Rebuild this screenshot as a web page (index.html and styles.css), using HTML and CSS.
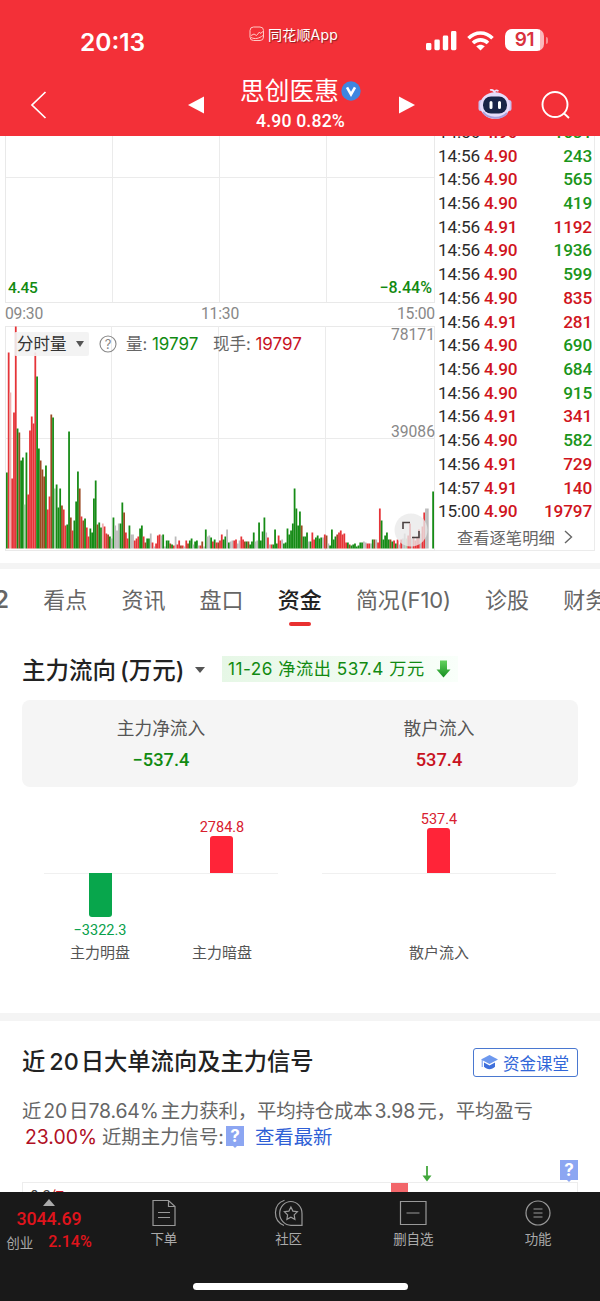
FILE: index.html
```html
<!DOCTYPE html>
<html lang="zh-CN">
<head>
<meta charset="utf-8">
<title>思创医惠</title>
<link rel="stylesheet" href="styles.css">
</head>
<body>
<header class="header">
  <div class="status">
    <div class="clock">20:13</div>
    <div class="app-mark">
      <svg width="16" height="16" viewBox="0 0 16 16" fill="none" stroke="#ffc9c4" stroke-width="1"><rect x="1" y="1" width="13.5" height="13.5" rx="3.5"/><path d="M2 9.5l3-1.5 2.5 1.5 3-3.5 1 1.5 2.500-2M2 11.500c4 2 8 1 12-2"/></svg>
      <span>同花顺App</span>
    </div>
    <div class="signals">
      <svg width="31" height="20" viewBox="0 0 31 20" fill="#fff"><rect x="0" y="12" width="5.400" height="7.200" rx="1.400"/><rect x="8.400" y="8.500" width="5.400" height="10.700" rx="1.400"/><rect x="16.800" y="4.500" width="5.400" height="14.700" rx="1.400"/><rect x="25" y="0" width="5.400" height="19.200" rx="1.400"/></svg>
      <svg width="27" height="20" viewBox="0 0 27 20" fill="none" stroke="#fff" stroke-width="3.600"><path d="M1.500 7.300C8.500 .2 18.500 .2 25.500 7.300"/><path d="M6 12c4.300-4.200 10.700-4.200 15 0"/><path d="M13.500 19.500L9.200 15.300c2.500-2.200 6.100-2.200 8.600 0z" fill="#fff" stroke="none"/></svg>
      <div class="battery"><span>91</span></div>
    </div>
  </div>
  <div class="nav">
    <svg class="back" width="18" height="30" viewBox="0 0 18 30" fill="none" stroke="#fff" stroke-width="1.700"><path d="M15.500 2L2 15l13.500 13"/></svg>
    <svg class="prev" width="17" height="18" viewBox="0 0 17 18" fill="#fff"><path d="M0 9L16 .5v17z"/></svg>
    <div class="stock">
      <div class="stock-name">思创医惠<svg width="20" height="20" viewBox="0 0 20 20"><circle cx="10" cy="10" r="9.700" fill="#3f86e0"/><path d="M6 6.300l4 7 4-7" fill="none" stroke="#fff" stroke-width="2.600"/></svg></div>
      <div class="stock-price">4.90 0.82%</div>
    </div>
    <svg class="next" width="17" height="18" viewBox="0 0 17 18" fill="#fff"><path d="M16 9L0 .5v17z"/></svg>
    <svg class="robot" width="34" height="32" viewBox="0 0 34 32"><path d="M17 5c-1-3-3-3.500-5-3M16.500 5c0-3 2-3 4-2" fill="none" stroke="#eee5ff" stroke-width="1.800"/><rect x=".5" y="12" width="5" height="11" rx="2.500" fill="#c9c0ef"/><rect x="28.500" y="12" width="5" height="11" rx="2.500" fill="#c9c0ef"/><ellipse cx="17" cy="17.500" rx="15" ry="13.300" fill="#e6ddfb"/><path d="M5 24c5 7 18 8 24 1" fill="none" stroke="#a9a0de" stroke-width="2"/><rect x="5" y="8.500" width="24" height="17" rx="8" fill="#1a2548"/><path d="M13 14.500v5M21.500 14.500v5" stroke="#fff" stroke-width="3" stroke-linecap="round"/></svg>
    <svg class="search" width="30" height="30" viewBox="0 0 30 30" fill="none" stroke="#fff" stroke-width="1.900"><circle cx="14" cy="14.500" r="12.500"/><path d="M22.800 23.300l5.200 4.700"/></svg>
  </div>
</header>

<section class="quote">
  <div class="minute">
    <div class="price-pane"><span class="low first">4.45</span><span class="low">−8.44%</span></div>
    <div class="times"><span>09:30</span><span>11:30</span><span>15:00</span></div>
    <div class="volume-pane">
      <svg id="volume" class="volume-bars" width="430" height="224" viewBox="5 326 430 224"></svg>
      <div class="scale"><span>78171</span><span>39086</span></div>
      <div class="volume-head">
        <div class="picker">分时量<i class="caret"></i></div>
        <svg width="18" height="18" viewBox="0 0 18 18"><circle cx="9" cy="9" r="8" fill="none" stroke="#888" stroke-width="1.100"/><text x="9" y="13.500" class="ask">?</text></svg>
        <span class="vol">量: <b class="g">19797</b></span>
        <span class="hand">现手: <b class="r">19797</b></span>
      </div>
      <svg class="expand" width="34" height="34" viewBox="0 0 34 34"><circle cx="17" cy="17" r="16.500" fill="#e9e9e9" fill-opacity=".78"/><path d="M9 16V9.500h7M25 18v6.500h-7" fill="none" stroke="#494040" stroke-width="1.600"/></svg>
    </div>
  </div>
  <div class="ticks">
    <div id="ticks" class="tick-list"></div>
    <div class="more">查看逐笔明细<svg width="9" height="14" viewBox="0 0 9 14" fill="none" stroke="#666" stroke-width="1.400"><path d="M1 1l6.500 6L1 13"/></svg></div>
  </div>
</section>

<nav class="tabs">
  <span class="tab-cut">2</span><span>看点</span><span>资讯</span><span>盘口</span><span class="active">资金</span><span class="f10">简况(F10)</span><span>诊股</span><span>财务</span>
</nav>

<section class="flow">
  <div class="flow-head">
    <h2>主力流向<em>(万元)</em></h2><i class="caret"></i>
    <div class="tag">11-26 净流出 537.4 万元
      <svg width="15" height="18" viewBox="0 0 15 18"><defs><linearGradient id="down" x2="0" y2="1"><stop stop-color="#65d35f"/><stop offset="1" stop-color="#158e20"/></linearGradient></defs><path d="M4 .5h7v9h3.500L7.500 17.500.5 9.500H4z" fill="url(#down)"/></svg>
    </div>
  </div>
  <div class="card">
    <div><span>主力净流入</span><b class="g">−537.4</b></div>
    <div><span>散户流入</span><b class="r">537.4</b></div>
  </div>
  <div class="bars">
    <div class="group pair">
      <div class="col"><div class="up"></div><div class="down"><i></i><b>−3322.3</b></div><span>主力明盘</span></div>
      <div class="col"><div class="up"><b>2784.8</b><i class="h37"></i></div><div class="down"></div><span>主力暗盘</span></div>
    </div>
    <div class="group">
      <div class="col"><div class="up"><b>537.4</b><i class="h45"></i></div><div class="down"></div><span>散户流入</span></div>
    </div>
  </div>
</section>

<section class="signal">
  <div class="signal-head">
    <h2>近<em>20</em>日大单流向及主力信号</h2>
    <div class="course"><svg width="17" height="15" viewBox="0 0 17 15"><path d="M8.500 0L17 4.500 8.500 9 0 4.500z" fill="#6d98ee"/><path d="M3 7.500l5.500 3 5.500-3v4.300c-3 3.200-8 3.200-11 0z" fill="#3f70dc"/><path d="M1.200 5v7" stroke="#6d98ee"/></svg>资金课堂</div>
  </div>
  <p class="line1">近<i>20</i>日<i class="pct">78.64%</i>主力获利，平均持仓成本<i>3.98</i>元，平均盈亏</p>
  <p class="line2"><i class="gain">23.00%</i><span>近期主力信号:</span><svg width="20" height="22" viewBox="0 0 20 22"><path d="M1 0h18v20h-7l-2 2-2-2H1z" fill="#8ca6f2"/><text x="10" y="16" class="mark">?</text></svg><a>查看最新</a></p>
  <div class="markers">
    <svg class="arrow" width="10" height="16" viewBox="0 0 10 16"><path d="M5 0v13" stroke="#43a83c" stroke-width="1.800"/><path d="M.5 9.500h9L5 15.500z" fill="#43a83c"/></svg>
    <svg width="20" height="22" viewBox="0 0 20 22"><path d="M1 0h18v20h-7l-2 2-2-2H1z" fill="#8ca6f2"/><text x="10" y="16" class="mark">?</text></svg>
  </div>
  <div class="signal-chart"><span>0.3<em>亿</em></span><i></i></div>
</section>

<footer class="bottom">
  <div class="index">
    <i class="tri"></i>
    <b>3044.69</b>
    <div><span>创业</span><b>2.14%</b></div>
  </div>
  <div class="item"><svg width="28" height="28" viewBox="0 0 28 28"><path d="M3 1.500h15.500l6.500 6V26.500H3zM18.500 1.500v6H25M8 13.500h12M8 18.500h12"/></svg>下单</div>
  <div class="item social"><svg width="30" height="28" viewBox="0 0 30 28"><path d="M10.500 1.200C-1.500 5 -1.500 22 10 26.500M27.500 26.300H17c-6 0-11.300-5-11.300-11.800S11 2.500 16.800 2.500 28 7.500 28 14.500v11.800z"/><path d="M16.900 8l2 4.100 4.500.6-3.200 3.200.7 4.500-4-2.100-4 2.100.7-4.500-3.200-3.200 4.500-.6z"/></svg>社区</div>
  <div class="item"><svg width="28" height="28" viewBox="0 0 28 28"><path d="M1.500 2.500h25.500v23H1.500zM7.500 14h13"/></svg>删自选</div>
  <div class="item"><svg width="28" height="28" viewBox="0 0 28 28"><circle cx="14" cy="14" r="12"/><path d="M9.500 10h9M9.500 14h9M9.500 18h9"/></svg>功能</div>
  <i class="home"></i>
</footer>
<script src="chart.js"></script>
</body>
</html>
```
FILE: styles.css
```css
* { box-sizing: border-box; margin: 0; }
body { width: 600px; height: 1301px; overflow: hidden; background: #fff; color: #222; display: flex; flex-direction: column; font-family: Inter, "Noto Sans CJK SC", sans-serif; }
i, em { font-style: normal; }
svg { display: block; flex: none; }
.g { color: #118a11; }
.r { color: #c8131f; }

.header { height: 136px; flex: none; background: #f33038; color: #fff; position: relative; z-index: 2; }
.status { height: 72px; display: grid; grid-template-columns: 226px 1fr 188px; }
.clock { padding: 27px 0 0 80px; font-size: 24.500px; line-height: 30px; font-weight: 600; letter-spacing: 0; }
.app-mark { display: flex; gap: 3px; padding: 26px 0 0 23px; font: 14px/18px Inter, "Noto Sans CJK SC", sans-serif; white-space: nowrap; text-shadow: 1px 1px 1px #8a2024; letter-spacing: .2px; }
.signals { display: flex; padding-top: 31px; padding-left: 14px; gap: 10px; }
.battery { margin: -2px 0 0 1px; width: 39px; height: 22px; border-radius: 7px; background: linear-gradient(90deg, #fff 91%, #fab8bb 91%); color: #d9323d; font-size: 19px; line-height: 22px; font-weight: 600; text-align: center; position: relative; letter-spacing: -.3px; }
.battery::after { content: ""; position: absolute; right: -4px; top: 8px; width: 2px; height: 7px; border-radius: 0 2px 2px 0; background: #f98d91; }
.nav { height: 64px; display: flex; align-items: flex-start; }
.back { margin: 18px 0 0 30px; }
.prev { margin: 24px 0 0 140px; }
.stock { width: 195px; margin-top: 2px; padding-left: 0; display: flex; flex-direction: column; align-items: center; }
.stock-name { display: flex; align-items: center; gap: 2px; font-size: 24.700px; line-height: 34px; font-weight: 400; margin-left: -4px; white-space: nowrap; }
.stock-price { font: 500 17.700px/24px Roboto, sans-serif; letter-spacing: .15px; margin: 1px 0 0 -4px; }
.next { margin: 24px 0 0 -1px; }
.robot { margin: 16px 0 0 62px; }
.search { margin: 18px 0 0 29px; }

.quote { height: 433px; flex: none; display: flex; padding-left: 5px; border-bottom: 6px solid #f4f4f4; }
.minute { width: 430px; flex: none; }
.price-pane { height: 167px; border: 1px solid #e9e9e9; border-top: 0; background: linear-gradient(#ebebeb, #ebebeb) 106px 0 / 1px 100% no-repeat, linear-gradient(#ebebeb, #ebebeb) 213px 0 / 1px 100% no-repeat, linear-gradient(#ebebeb, #ebebeb) 320px 0 / 1px 100% no-repeat, linear-gradient(#ebebeb, #ebebeb) 0 41px / 100% 1px no-repeat; display: flex; justify-content: space-between; align-items: flex-end; padding: 0 2px 4px; }
.low { font: 500 16px/20px Roboto, sans-serif; color: #118a11; }
.first { font-size: 15.500px; letter-spacing: -.3px; }
.times { height: 23px; display: flex; justify-content: space-between; font: 15.700px/22px Roboto, sans-serif; letter-spacing: -.2px; color: #888; }
.volume-pane { position: relative; height: 225px; border: 1px solid #e9e9e9; }
.volume-bars { position: absolute; left: -1px; top: -1px; }
.scale { position: absolute; right: -1px; top: -2px; display: flex; flex-direction: column; gap: 77px; text-align: right; font: 15.700px/20px Roboto, sans-serif; color: #888; }
.volume-head { position: absolute; left: 8px; top: 5px; height: 24px; display: flex; align-items: center; font: 16.500px/24px Inter, "Noto Sans CJK SC", sans-serif; color: #666; white-space: nowrap; }
.volume-head b { font-weight: 400; font-size: 17px; }
.picker { width: 75px; height: 24px; padding-left: 3px; background: rgba(242, 242, 242, .9); color: #333; display: flex; align-items: center; gap: 9px; border-radius: 2px; margin-right: 10px; }
.caret { width: 0; height: 0; border: 4.500px solid transparent; border-top: 6px solid #555; border-bottom: 0; }
.ask { font: 13px Inter, sans-serif; fill: #888; text-anchor: middle; }
.vol { margin-left: 9px; width: 87px; }
.expand { position: absolute; left: 388px; top: 186px; }
.ticks { width: 160px; height: 415px; flex: none; border-right: 1px solid #ebebeb; border-bottom: 1px solid #ebebeb; }
.tick-list { height: 387px; overflow: hidden; display: flex; flex-direction: column; justify-content: flex-end; padding: 0 2px 0 3px; }
.tick { height: 23.730px; flex: none; display: grid; grid-template-columns: 46px 50px 1fr; font: 500 17.200px/24px Roboto, sans-serif; letter-spacing: -.15px; color: #2b2b2b; }
.tick span:last-child { text-align: right; }
.tick .g { color: #1a951a; }
.tick .r { color: #d01420; }
.tick span:first-child { font-weight: 400; }
.more { display: flex; align-items: center; gap: 9px; padding-left: 22px; height: 27px; font: 16.300px/24px "Noto Sans CJK SC", sans-serif; color: #666; }

.tabs { height: 76px; flex: none; display: flex; gap: 34.200px; padding-top: 14px; font: 22px/34px Inter, "Noto Sans CJK SC", sans-serif; color: #666; font-weight: 400; white-space: nowrap; overflow: hidden; }
.tab-cut { width: 9px; display: flex; justify-content: flex-end; font-weight: 600; font-size: 24px; font-family: Inter, sans-serif; }
.active { color: #222; font-weight: 500; display: flex; flex-direction: column; align-items: center; }
.active::after { content: ""; width: 22px; height: 4px; margin-top: 5px; border-radius: 2px; background: #e93030; }
.f10 { letter-spacing: -.15px; }

.flow { height: 376px; flex: none; padding: 10px 22px 0; border-bottom: 8px solid #f4f4f4; }
.flow-head { height: 45px; display: flex; align-items: flex-start; }
.flow h2 { font: 500 23.500px/32px Inter, "Noto Sans CJK SC", sans-serif; white-space: nowrap; width: 162px; }
.flow h2 em { margin-left: 4px; }
.flow-head > .caret { margin: 12px 17px 0 11px; border-width: 6px 5.500px 0; }
.tag { margin-top: 1px; height: 26px; display: flex; align-items: center; gap: 11px; padding: 0 7px 0 6px; font-size: 17.200px; letter-spacing: .5px; line-height: 26px; color: #118a11; white-space: nowrap; background: linear-gradient(90deg, #e6f7e6, #f9fffa); }
.card { height: 87px; border-radius: 8px; background: #f5f5f5; display: grid; grid-template-columns: 1fr 1fr; text-align: center; line-height: 30px; padding-top: 14px; }
.card div { display: flex; flex-direction: column; }
.card span { font-size: 17.700px; font-weight: 400; color: #555; }
.card b { font: 500 18.300px/32px Roboto, sans-serif; }
.bars { display: grid; grid-template-columns: 1fr 1fr; padding-top: 20px; }
.group { display: grid; grid-template-columns: 1fr; padding: 0 22px; background: linear-gradient(#f0f0f0, #f0f0f0) center 66px / 234px 1px no-repeat; }
.pair { grid-template-columns: 1fr 1fr; padding: 0 17px; }
.col { display: flex; flex-direction: column; align-items: center; }
.up { height: 66px; display: flex; flex-direction: column; justify-content: flex-end; align-items: center; }
.down { height: 67px; display: flex; flex-direction: column; align-items: center; }
.col b { font: 400 14.500px/18px Roboto, sans-serif; }
.up b { color: #d8202f; margin-bottom: -2px; }
.down b { color: #08a04a; margin-top: 5px; }
.up i { width: 23px; background: #ff2438; border-radius: 3px 3px 0 0; margin-top: 1px; }
.h37 { height: 37px; }
.h45 { height: 45px; }
.down i { width: 23px; height: 45px; border-radius: 0 0 3px 3px; background: #08a64c; }
.col span { font-size: 15px; line-height: 26px; color: #555; font-weight: 400; }

.signal { flex: 1; padding: 27px 22px 0; overflow: hidden; }
.signal-head { display: flex; justify-content: space-between; height: 50px; }
.signal h2 { font: 500 23.300px/28px Inter, "Noto Sans CJK SC", sans-serif; white-space: nowrap; }
.signal h2 em { margin: 0 2px 0 4px; }
.course { width: 105px; height: 29px; border: 1px solid #4a78d0; border-radius: 3px; display: flex; align-items: center; gap: 5px; padding-left: 7px; font-size: 16.500px; color: #3166d8; white-space: nowrap; }
.signal p { height: 26px; line-height: 26px; font-size: 19.400px; color: #666; font-weight: 400; white-space: nowrap; }
.signal .line1 { letter-spacing: -.12px; }
.line1 i { margin: 0 2px; }
.line1 .pct { margin-left: 0; }
.signal .line2 { display: flex; align-items: center; padding-left: 3px; }
.gain { color: #b00f24; margin-right: 5px; }
.line2 a { color: #2f5fd6; margin-left: 10px; font-weight: 400; }
.line2 svg { margin-left: 1px; }
.mark { font: 700 17px Inter, sans-serif; fill: #fff; text-anchor: middle; }
.markers { height: 32px; display: flex; justify-content: flex-end; align-items: flex-end; margin-right: -1px; gap: 127px; }
.markers svg { margin-bottom: 0; }
.signal-chart { height: 40px; border: 1px solid #ededed; display: flex; align-items: flex-start; font-size: 14px; color: #444; }
.signal-chart span { padding: 4px 0 0 7px; line-height: 18px; width: 368px; }
.signal-chart em { color: #c8131f; }
.signal-chart i { width: 17px; height: 20px; background: #f2666a; }

.bottom { height: 109px; flex: none; background: #191919; display: grid; grid-template-columns: 101px repeat(4, 1fr); position: relative; z-index: 2; }
.index { display: flex; flex-direction: column; align-items: center; color: #e0141c; padding: 7px 3px 0 0; }
.index b { font: 500 17.700px/27px Roboto, sans-serif; }
.tri { border: 6px solid transparent; border-top: 0; border-bottom: 7px solid #aaa; }
.index div { display: flex; align-items: center; gap: 15px; height: 18px; }
.index span { color: #aaa; font-size: 13.500px; }
.index div b { font-size: 16px; line-height: 20px; }
.item { display: flex; flex-direction: column; align-items: center; padding: 7px 0 0 1px; color: #aaa; font-size: 13.500px; line-height: 25px; }
.item svg { fill: none; stroke: #999; stroke-width: 1.200; }
.home { position: absolute; left: 193px; top: 91px; width: 215px; height: 7px; border-radius: 4px; background: #fff; }
```
FILE: chart.js
```js
// One entry per trading minute: colour key, then bar height.
const minutes = `g76 r196 p156 r70 r136 r222 g120 m116 g88 g91 l44 g96 r54 r118 r132 r125 r196 g172 g100 m88
m79 m72 g83 r39 r52 m134 g131 l60 g64 g41 g60 m43 r39 r23 g24 g117 m31 r18 g28 g47
g77 m60 r32 m28 g30 r21 r12 g20 g16 g50 g68 m24 g26 g21 p25 r22 r15 m14 g12 n10
g31 n23 n18 n25 g25 g46 m36 r16 r10 g23 n14 n14 r8 r10 r12 g20 g23 r12 m6 g10
g10 n15 r6 n2 r5 r13 r14 n13 g14 n2 g8 g8 m5 g4 r3 n12 r4 r8 m3 r3
n2 r8 m5 g8 g10 n4 g7 g8 n3 r3 m7 n2 g19 n12 n13 g11 r7 g9 r6 m6
r8 r14 g9 g12 n19 g6 n7 n8 r8 r9 n5 n8 r12 r9 m7 g7 m7 g4 g7 g16
n7 n8 g26 g8 g17 g31 n16 r11 n4 r4 g4 g19 g5 r13 r8 n9 g5 g6 g20 g14
g18 g25 g60 g40 g23 g37 m23 g12 g12 g16 n7 g7 r16 r9 g11 g13 g10 g11 n11 r14
m13 n5 g3 g19 g9 g12 m14 r16 r18 r14 r15 r6 g6 m4 g3 g4 g5 g2 g3 g6
g6 n7 n6 r5 r5 n5 g9 m9 n9 r6 r40 g28 g9 g13 g16 g9 m9 g7 r8 g5
r9 n4 r9 n10 n15 l10 r13 r25 n10 r12 r8 r12 r19 n15 r22 r36 n40 n40 n0 n0 g57`.split(/\s+/);
const colours = { g: '#168b16', r: '#e53438', m: '#9a4a22', p: '#efb0b0', l: '#a9d0a9', n: '#bbb' };
const step = 428 / 241;
const grid = '<path d="M111.5 326v224M218.500 326v224M325.500 326v224M5 438.500h430" stroke="#ebebeb"/>';
document.getElementById('volume').innerHTML = grid + minutes.map((m, i) =>
  `<rect x="${(6 + i * step).toFixed(2)}" y="${548.5 - m.slice(1)}" width="1.78" height="${m.slice(1)}" fill="${colours[m[0]]}"/>`).join('');

const trades = [
  ['14:56', '4.90', '1631', 'g'], ['14:56', '4.90', '243', 'g'], ['14:56', '4.90', '565', 'g'],
  ['14:56', '4.90', '419', 'g'], ['14:56', '4.91', '1192', 'r'], ['14:56', '4.90', '1936', 'g'],
  ['14:56', '4.90', '599', 'g'], ['14:56', '4.90', '835', 'r'], ['14:56', '4.91', '281', 'r'],
  ['14:56', '4.90', '690', 'g'], ['14:56', '4.90', '684', 'g'], ['14:56', '4.90', '915', 'g'],
  ['14:56', '4.91', '341', 'r'], ['14:56', '4.90', '582', 'g'], ['14:56', '4.91', '729', 'r'],
  ['14:57', '4.91', '140', 'r'], ['15:00', '4.90', '19797', 'r'],
];
document.getElementById('ticks').innerHTML = trades.map(([t, p, v, c]) =>
  `<div class="tick"><span>${t}</span><span class="r">${p}</span><span class="${c}">${v}</span></div>`).join('');
```
